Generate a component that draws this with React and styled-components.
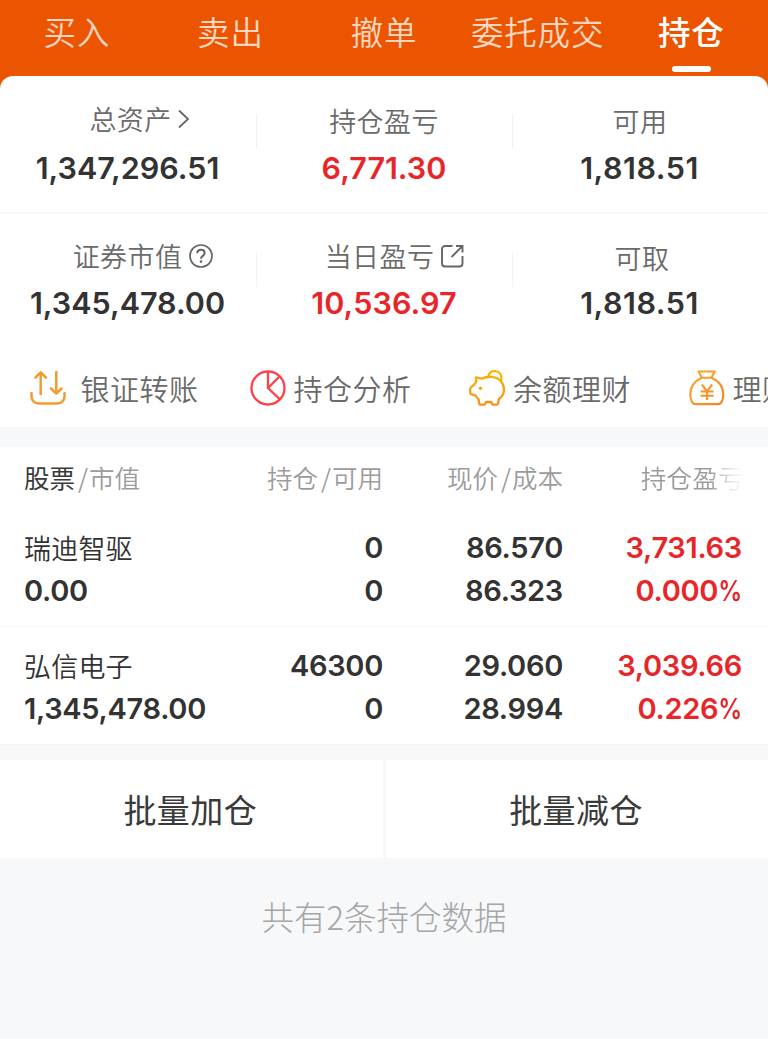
import React, { useState } from "react";
import styled, { createGlobalStyle, css } from "styled-components";

const GlobalStyle = createGlobalStyle`
  *,
  *::before,
  *::after {
    box-sizing: border-box;
  }

  body {
    margin: 0;
    background: #f7f8fa;
    font-family: "Noto Sans CJK SC", sans-serif;
    color: #333;
    overflow: hidden;
  }

  button {
    margin: 0;
    padding: 0;
    border: 0;
    background: none;
    font: inherit;
    color: inherit;
    cursor: pointer;
  }
`;

const StyledPage = styled.div`
  width: 768px;
  height: 1039px;
  display: flex;
  flex-direction: column;
  overflow: hidden;
  background: #f7f8fa;
  border-bottom: 1px solid #fdfdfd;
`;

const StyledTabs = styled.nav`
  flex: none;
  height: 88px;
  margin-bottom: -12px;
  display: grid;
  grid-template-columns: repeat(5, 1fr);
  align-items: start;
  background: #eb5500;
`;

const StyledTab = styled.button`
  height: 72px;
  padding-top: 7px;
  display: flex;
  flex-direction: column;
  align-items: center;
  justify-content: space-between;
  font-size: 32.5px;
  line-height: 48px;
  letter-spacing: 0.8px;
  white-space: nowrap;
  font-weight: ${(props) => (props.$active ? 500 : 350)};
  color: ${(props) => (props.$active ? "#fff" : "#ffd6c2")};

  &::after {
    content: "";
    width: 39px;
    height: 6px;
    border-radius: 3px;
    background: ${(props) => (props.$active ? "#fff" : "transparent")};
  }
`;

const StyledCard = styled.section`
  flex: none;
  height: 351px;
  position: relative;
  border-radius: 13px 13px 0 0;
  background: #fff;
`;

const StyledSummaryRow = styled.div`
  height: ${(props) => props.$height}px;
  display: grid;
  grid-template-columns: 257px 256px 255px;

  & + & {
    border-top: 2px solid #f5f6f7;
  }
`;

const StyledCell = styled.div`
  display: flex;
  flex-direction: column;
  align-items: center;
  padding-top: ${(props) => props.$top}px;
  padding-right: 2px;
  background: ${(props) =>
    props.$divided
      ? `linear-gradient(#f2f2f2, #f2f2f2) right ${props.$line}px / 1px 35px no-repeat`
      : "none"};
`;

const StyledLabel = styled.div`
  height: 40px;
  padding-top: ${(props) => props.$drop || 0}px;
  padding-left: ${(props) => props.$indent || 0}px;
  display: flex;
  align-items: center;
  gap: ${(props) => props.$gap || 0}px;
  font-size: 27px;
  font-weight: 350;
  line-height: 40px;
  letter-spacing: 0.4px;
  color: #6a6a6a;

  svg {
    flex: none;
  }
`;

const numberFont = css`
  font-family: Inter, sans-serif;
  font-weight: 600;
  white-space: nowrap;
  color: ${(props) => (props.$red ? "#e8262a" : "#333")};
`;

const StyledAmount = styled.div`
  ${numberFont}
  margin-top: ${(props) => props.$gap}px;
  font-size: 30.5px;
  line-height: 40px;
  letter-spacing: ${(props) => props.$spacing || 0}px;
`;

const StyledShortcuts = styled.div`
  height: 72px;
  padding-left: 30px;
  display: flex;
  align-items: center;
  overflow: hidden;
`;

const StyledShortcut = styled.button`
  flex: none;
  width: 219.5px;
  display: flex;
  align-items: center;
  gap: ${(props) => (props.$wide ? 14.5 : 8)}px;
  font-size: 29px;
  font-weight: 350;
  line-height: 44px;
  letter-spacing: 0.5px;
  white-space: nowrap;
  color: #6a6a6a;

  svg {
    flex: none;
  }
`;

const StyledTable = styled.section`
  flex: none;
  margin-top: 20px;
  background: #fff;
`;

const tableColumns = css`
  display: grid;
  grid-template-columns: 210px 149px 180px 179px;
  padding: 0 26px 0 24px;
`;

const StyledTableHead = styled.div`
  ${tableColumns}
  height: 62px;
  padding-bottom: 2px;
  align-items: center;
  font-size: 25.5px;
  font-weight: 350;
  line-height: 38px;
  color: #9c9c9c;
  white-space: nowrap;

  b {
    font-weight: 400;
    color: #3a3a3a;
  }

  i {
    padding: 0 1px 0 3px;
    font-style: normal;
  }
`;

const StyledHeadCell = styled.div`
  text-align: ${(props) => (props.$left ? "left" : "right")};
  ${(props) =>
    props.$fade &&
    css`
      margin-right: -2px;
      letter-spacing: 0.3px;
      mask-image: linear-gradient(to left, transparent 0, rgba(0, 0, 0, 0.5) 22px, #000 34px);
    `}
`;

const StyledTableRow = styled.div`
  ${tableColumns}
  height: 118px;
  padding-top: 17px;
  align-content: start;
  border-bottom: 1px solid #f3f4f5;
`;

const StyledPair = styled.div`
  ${numberFont}
  font-size: 29px;
  line-height: 43px;
  letter-spacing: -0.3px;
  text-align: ${(props) => (props.$left ? "left" : "right")};
`;

const StyledStockName = styled.div`
  font-family: "Noto Sans CJK SC", sans-serif;
  font-size: 27px;
  font-weight: 350;
  letter-spacing: 0.2px;
`;

const StyledPercent = styled.span`
  display: inline-block;
  margin-left: -5px;
  transform: scaleX(0.82);
  transform-origin: right center;
`;

const StyledActions = styled.div`
  flex: none;
  height: 98px;
  margin-top: 15px;
  display: grid;
  grid-template-columns: 382.5px 1fr;
  column-gap: 3.5px;
`;

const StyledAction = styled.button`
  padding-right: 2px;
  background: #fff;
  font-size: 33px;
  line-height: 48px;
  letter-spacing: 0.4px;
  color: #3a3a3a;
`;

const StyledTotal = styled.p`
  margin: 34px 0 0;
  font-size: 32.5px;
  font-weight: 200;
  line-height: 48px;
  text-align: center;
  color: #a6a6a6;
`;

const ChevronIcon = () => (
  <svg width="12" height="20" viewBox="0 0 12 20" fill="none" stroke="#666" strokeWidth="1.8">
    <path d="M1 1.5 10 10 1 18.5" />
  </svg>
);

const HelpIcon = () => (
  <svg width="24" height="24" viewBox="0 0 24 24" fill="none" stroke="#666" strokeWidth="1.7">
    <circle cx="12" cy="12" r="11" />
    <path d="M8.3 9.3c0-2.2 1.6-3.5 3.7-3.5s3.6 1.3 3.6 3.2c0 2.9-3.6 2.9-3.6 5.8" strokeWidth="2" />
    <circle cx="12" cy="17.6" r="1.3" fill="#666" stroke="none" />
  </svg>
);

const ShareIcon = () => (
  <svg width="23" height="24" viewBox="0 0 23 24" fill="none" stroke="#666" strokeWidth="1.9">
    <path d="M11.5 2H4a3 3 0 0 0-3 3v14.5a3 3 0 0 0 3 3h14.5a3 3 0 0 0 3-3V12" />
    <path d="M15 2h6.5v6.5M21.5 2l-11 11" />
  </svg>
);

const TransferIcon = () => (
  <svg
    width="36"
    height="36"
    viewBox="0 0 36 36"
    fill="none"
    stroke="#f29b30"
    strokeWidth="2.5"
    strokeLinecap="round"
    strokeLinejoin="round"
  >
    <path d="M1.5 23v3.5a7 7 0 0 0 7 7h19a7 7 0 0 0 7-7V23" />
    <path d="M10.7 24V2.5M5.5 7.500l5.200-5.200 5.200 5.200" />
    <path d="M26.3 2v21.5M21 18.500l5.300 5.200 5.200-5.200" />
  </svg>
);

const PieIcon = () => (
  <svg width="36" height="36" viewBox="0 0 36 36" fill="none" stroke="#fb4349" strokeWidth="2.3">
    <circle cx="18" cy="18" r="16.5" />
    <path d="M18 1.500V18l12 11.300M18 18 29.500 6.500" />
  </svg>
);

const PiggyIcon = () => (
  <svg
    width="36"
    height="36"
    viewBox="0 0 36 36"
    fill="none"
    stroke="url(#piggy)"
    strokeWidth="2.3"
    strokeLinejoin="round"
  >
    <defs>
      <linearGradient id="piggy" x1="0" y1="0" x2="0" y2="36" gradientUnits="userSpaceOnUse">
        <stop offset="0" stopColor="#f8b900" />
        <stop offset="1" stopColor="#f79020" />
      </linearGradient>
    </defs>
    <path d="M7 7.300 12.500 8.600C15.500 7.200 19 6.500 23 6.800c7.200.6 12 6 12 12.700 0 4.300-2 7.400-5.200 9.700l-.7 4.300c-.1.700-.6 1.200-1.300 1.200h-3.400c-.7 0-1.200-.3-1.400-.9l-.7-1.800h-5.200l-.8 1.800c-.3.600-.7.900-1.400.9h-3.300c-.8 0-1.300-.5-1.400-1.200l-.7-4.300c-1.200-1-2.100-2.200-2.800-3.500l-4-1.300a2 2 0 0 1-1.500-2v-3.600c0-.9.500-1.400 1.200-1.800 1.700-.9 3.300-2.700 4.800-4.800Z" />
    <path d="M19.200 6.800c.6-3.400 2.900-5.700 6.300-5.700 4.100 0 6.900 2.900 6.900 6.700 0 1.100-.2 2-.6 2.800" />
    <circle cx="11.500" cy="18.300" r="1.700" fill="#f7a510" stroke="none" />
  </svg>
);

const MoneyBagIcon = () => (
  <svg
    width="36"
    height="36"
    viewBox="0 0 36 36"
    fill="none"
    stroke="url(#bag)"
    strokeWidth="2.1"
    strokeLinejoin="round"
  >
    <defs>
      <linearGradient id="bag" x1="0" y1="0" x2="36" y2="36" gradientUnits="userSpaceOnUse">
        <stop offset="0" stopColor="#f9ab35" />
        <stop offset="1" stopColor="#f58220" />
      </linearGradient>
    </defs>
    <path d="M9.500 1.500h16.200l-3.300 6.200h-9.600Z" />
    <path d="M12.800 7.700C5.500 11 1.300 17.200 1.300 24.300c0 2.600.5 4.900 1.400 7.100.8 2 1.900 2.700 3.800 2.700h22.600c1.900 0 3-.7 3.800-2.700.9-2.200 1.400-4.500 1.400-7.100 0-7.100-4.400-13.300-11.900-16.600" />
    <path d="m12.800 14.500 5.200 6.700 5.200-6.700M18 21v9M11.500 21.500h13M11.500 25.700h13" />
  </svg>
);

const tabs = ["买入", "卖出", "撤单", "委托成交", "持仓"];

const holdings = [
  {
    name: "瑞迪智驱",
    value: "0.00",
    held: "0",
    available: "0",
    price: "86.570",
    cost: "86.323",
    profit: "3,731.63",
    rate: "0.000",
  },
  {
    name: "弘信电子",
    value: "1,345,478.00",
    held: "46300",
    available: "0",
    price: "29.060",
    cost: "28.994",
    profit: "3,039.66",
    rate: "0.226",
  },
];

const Summary = () => (
  <>
    <StyledSummaryRow $height={136}>
      <StyledCell $top={23} $divided $line={38}>
        <StyledLabel $indent={24} $gap={6}>
          总资产
          <ChevronIcon />
        </StyledLabel>
        <StyledAmount $gap={9}>1,347,296.51</StyledAmount>
      </StyledCell>
      <StyledCell $top={23} $divided $line={38}>
        <StyledLabel $drop={4}>持仓盈亏</StyledLabel>
        <StyledAmount $gap={9} $red>
          6,771.30
        </StyledAmount>
      </StyledCell>
      <StyledCell $top={23}>
        <StyledLabel $drop={4} $indent={1}>
          可用
        </StyledLabel>
        <StyledAmount $gap={9} $spacing={0.5}>
          1,818.51
        </StyledAmount>
      </StyledCell>
    </StyledSummaryRow>
    <StyledSummaryRow $height={140}>
      <StyledCell $top={22} $divided $line={38}>
        <StyledLabel $indent={31} $gap={7}>
          证券市值
          <HelpIcon />
        </StyledLabel>
        <StyledAmount $gap={7}>1,345,478.00</StyledAmount>
      </StyledCell>
      <StyledCell $top={22} $divided $line={38}>
        <StyledLabel $indent={21} $gap={7}>
          当日盈亏
          <ShareIcon />
        </StyledLabel>
        <StyledAmount $gap={7} $spacing={0.1} $red>
          10,536.97
        </StyledAmount>
      </StyledCell>
      <StyledCell $top={22}>
        <StyledLabel $drop={4} $indent={5}>
          可取
        </StyledLabel>
        <StyledAmount $gap={7} $spacing={0.5}>
          1,818.51
        </StyledAmount>
      </StyledCell>
    </StyledSummaryRow>
  </>
);

const Shortcuts = () => (
  <StyledShortcuts>
    <StyledShortcut $wide>
      <TransferIcon />
      银证转账
    </StyledShortcut>
    <StyledShortcut>
      <PieIcon />
      持仓分析
    </StyledShortcut>
    <StyledShortcut>
      <PiggyIcon />
      余额理财
    </StyledShortcut>
    <StyledShortcut>
      <MoneyBagIcon />
      理财
    </StyledShortcut>
  </StyledShortcuts>
);

const Holdings = () => (
  <StyledTable>
    <StyledTableHead>
      <StyledHeadCell $left>
        <b>股票</b>
        <i>/</i>市值
      </StyledHeadCell>
      <StyledHeadCell>
        持仓<i>/</i>可用
      </StyledHeadCell>
      <StyledHeadCell>
        现价<i>/</i>成本
      </StyledHeadCell>
      <StyledHeadCell $fade>持仓盈亏</StyledHeadCell>
    </StyledTableHead>
    {holdings.map((item) => (
      <StyledTableRow key={item.name}>
        <StyledPair $left>
          <StyledStockName>{item.name}</StyledStockName>
          <div>{item.value}</div>
        </StyledPair>
        <StyledPair>
          <div>{item.held}</div>
          <div>{item.available}</div>
        </StyledPair>
        <StyledPair>
          <div>{item.price}</div>
          <div>{item.cost}</div>
        </StyledPair>
        <StyledPair $red>
          <div>{item.profit}</div>
          <div>
            {item.rate}
            <StyledPercent>%</StyledPercent>
          </div>
        </StyledPair>
      </StyledTableRow>
    ))}
  </StyledTable>
);

const App = () => {
  const [activeTab, setActiveTab] = useState("持仓");

  return (
    <StyledPage>
      <GlobalStyle />
      <StyledTabs>
        {tabs.map((tab) => (
          <StyledTab key={tab} $active={tab === activeTab} onClick={() => setActiveTab(tab)}>
            {tab}
          </StyledTab>
        ))}
      </StyledTabs>
      <StyledCard>
        <Summary />
        <Shortcuts />
      </StyledCard>
      <Holdings />
      <StyledActions>
        <StyledAction>批量加仓</StyledAction>
        <StyledAction>批量减仓</StyledAction>
      </StyledActions>
      <StyledTotal>共有{holdings.length}条持仓数据</StyledTotal>
    </StyledPage>
  );
};

export default App;
